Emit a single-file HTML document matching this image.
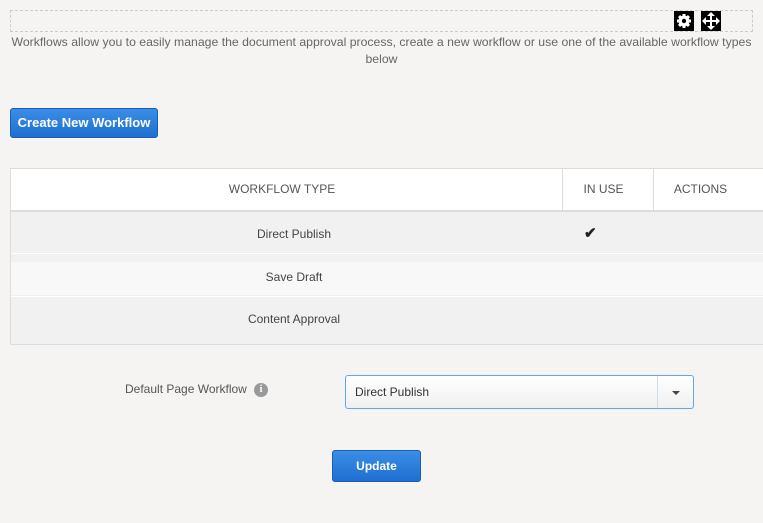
<!DOCTYPE html>
<html><head><style>
body{margin:0;width:763px;height:523px;background:#f5f4f2;font-family:"Liberation Sans",sans-serif;position:relative;overflow:hidden;color:#555}
.dash{position:absolute;left:10px;top:10px;width:743px;height:22px;border:1px dashed #ccc;box-sizing:border-box}
.ic{position:absolute;top:11px;width:20px;height:20px;background:#000}
.intro{position:absolute;left:0;top:34px;width:763px;text-align:center;font-size:12.25px;line-height:17px;color:#666}
.btn{position:absolute;background:linear-gradient(#3a8ee6,#1f6fd0);border:1px solid #1a5eb0;border-radius:3px;color:#fff;font-weight:bold;font-size:13px;text-align:center;box-sizing:border-box}
.tbl{position:absolute;left:10px;top:168px;width:760px;height:177px;border:1px solid #dcdcdc;box-sizing:border-box;background:#f1f1f1}
.hd{position:absolute;left:0;top:0;right:0;height:41px;background:#fff;border-bottom:2px solid #ddd;font-size:12px;color:#555}
.hd div{position:absolute;top:0;height:41px;line-height:41px;text-align:center}
.row{position:absolute;left:0;right:0;font-size:12px;color:#444}
.row span{position:absolute;left:0;width:566px;text-align:center}
</style></head><body>
<div class="dash"></div>
<div class="ic" style="left:674px"><svg width="20" height="20" viewBox="0 0 20 20"><g fill="#fff"><circle cx="10" cy="10" r="5.5"/><rect x="8.5" y="3" width="3" height="14"/><rect x="3" y="8.5" width="14" height="3"/><rect x="8.5" y="3" width="3" height="14" transform="rotate(45 10 10)"/><rect x="8.5" y="3" width="3" height="14" transform="rotate(-45 10 10)"/></g><circle cx="10" cy="10" r="2.2" fill="#000"/></svg></div>
<div class="ic" style="left:701px"><svg width="20" height="20" viewBox="0 0 20 20" fill="#fff"><rect x="9" y="4" width="2" height="12"/><rect x="4" y="9" width="12" height="2"/><path d="M10 1l4 4H6zM10 19l4-4H6zM1 10l4-4v8zM19 10l-4-4v8z"/></svg></div>
<div class="intro">Workflows allow you to easily manage the document approval process, create a new workflow or use one of the available workflow types<br>below</div>
<div class="btn" style="left:10px;top:108px;width:148px;height:30px;line-height:28px">Create New Workflow</div>
<div class="tbl">
<div class="hd"><div style="left:0;width:542px">WORKFLOW TYPE</div><div style="left:551px;width:81px;border-left:1px solid #ddd">IN USE</div><div style="left:642px;width:93px;border-left:1px solid #ddd">ACTIONS</div></div>
<div class="row" style="top:43px;height:41px;line-height:44px;border-bottom:1px solid #fff"><span>Direct Publish</span><b style="position:absolute;left:573px;font-size:15px;color:#222">✔</b></div>
<div class="row" style="top:93px;height:33px;line-height:30px;background:#f8f8f8"><span>Save Draft</span></div>
<div class="row" style="top:127px;height:40px;line-height:44px;border-top:1px solid #fff"><span>Content Approval</span></div>
</div>
<div style="position:absolute;left:125px;top:382px;font-size:12px;color:#555">Default Page Workflow</div>
<div style="position:absolute;left:254px;top:383px;width:14px;height:14px;border-radius:50%;background:#999;color:#fff;font-size:10px;font-weight:bold;text-align:center;line-height:14px;font-family:'Liberation Serif',serif">i</div>
<div style="position:absolute;left:345px;top:375px;width:349px;height:34px;border:1px solid #6aa4e6;border-radius:3px;box-sizing:border-box;background:linear-gradient(#fff,#f0f0f0);font-size:12px;color:#333;line-height:32px;padding-left:9px">Direct Publish<div style="position:absolute;right:0;top:0;width:35px;height:32px;border-left:1px solid #cfdce9"><div style="position:absolute;left:14px;top:15px;border:4px solid transparent;border-top:4px solid #444;border-bottom:0"></div></div></div>
<div class="btn" style="left:332px;top:450px;width:89px;height:32px;line-height:30px;font-size:12px">Update</div>
</body></html>
